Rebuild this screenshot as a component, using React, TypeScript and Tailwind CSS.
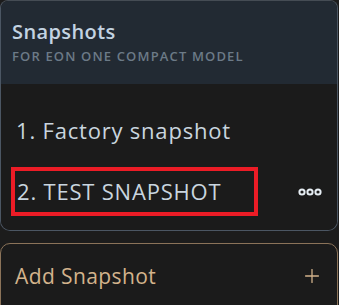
import { Plus } from 'lucide-react';

const font = { fontFamily: '"Open Sans", "Noto Sans", sans-serif' };

function Dots() {
  return (
    <svg width="24" height="8" viewBox="0 0 24 8" className="text-[#e6edf3]">
      {[4, 12, 20].map((cx) => (
        <circle key={cx} cx={cx} cy="4" r="2.6" fill="none" stroke="currentColor" strokeWidth="2" />
      ))}
    </svg>
  );
}

export default function App() {
  return (
    <div className="h-[305px] w-[339px] overflow-hidden bg-[#1c1c1c]" style={font}>
      <div className="w-[338px] overflow-hidden rounded-b-[10px] rounded-t-[8px] border border-[#4b5663] border-t-[#454c54]">
        <div className="h-[83px] bg-[#222a33] px-[11px] pt-[17px]">
          <h2 className="text-[20px] font-semibold leading-[28px] tracking-[0.4px] text-[#c3d3e2]">
            Snapshots
          </h2>
          <p className="mt-[2px] text-[13px] font-semibold leading-[17px] tracking-[1.15px] text-[#6c7a87]">
            FOR EON ONE COMPACT MODEL
          </p>
        </div>
        <div className="bg-[#1b1b1b] pb-[14px] pt-[28px]">
          <div className="flex h-[36px] items-center px-[15px] text-[22px] tracking-[0.8px] text-[#c9d5df]">
            1. Factory snapshot
          </div>
          <div className="mt-[19px] flex items-center justify-between pr-[15px]">
            <div className="ml-[10px] flex h-[49px] w-[247px] items-center border-[4px] border-[#ec1c26] px-[2px] text-[22px] tracking-[0.8px] text-[#c9d5df]">
              2. TEST SNAPSHOT
            </div>
            <Dots />
          </div>
        </div>
      </div>
      <div className="mt-[12px] flex h-[70px] w-[338px] items-start justify-between rounded-t-[10px] border border-[#8b7359] bg-[#1b1b1b] pl-[14px] pr-[14px] pt-[17px]">
        <span className="text-[21px] leading-[30px] tracking-[0.4px] text-[#d3b38c]">Add Snapshot</span>
        <Plus className="mt-[4px] h-[22px] w-[22px] text-[#d3b38c]" strokeWidth={1.4} />
      </div>
    </div>
  );
}
